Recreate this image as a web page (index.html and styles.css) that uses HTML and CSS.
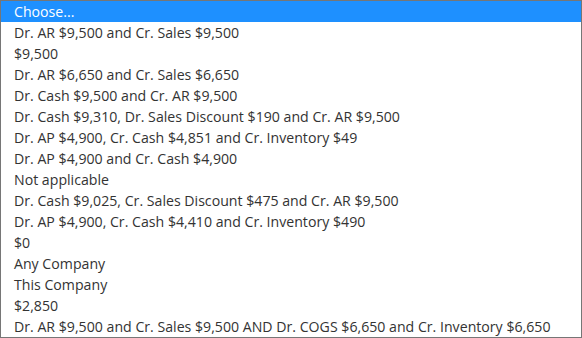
FILE: index.html
```html
<!DOCTYPE html>
<html lang="en">
<head>
  <meta charset="UTF-8">
  <title>Choose</title>
  <link rel="stylesheet" href="styles.css">
</head>
<body>
  <ul class="options">
    <li class="option selected">Choose...</li>
    <li class="option">Dr. AR $9,500 and Cr. Sales $9,500</li>
    <li class="option">$9,500</li>
    <li class="option">Dr. AR $6,650 and Cr. Sales $6,650</li>
    <li class="option">Dr. Cash $9,500 and Cr. AR $9,500</li>
    <li class="option">Dr. Cash $9,310, Dr. Sales Discount $190 and Cr. AR $9,500</li>
    <li class="option">Dr. AP $4,900, Cr. Cash $4,851 and Cr. Inventory $49</li>
    <li class="option">Dr. AP $4,900 and Cr. Cash $4,900</li>
    <li class="option">Not applicable</li>
    <li class="option">Dr. Cash $9,025, Cr. Sales Discount $475 and Cr. AR $9,500</li>
    <li class="option">Dr. AP $4,900, Cr. Cash $4,410 and Cr. Inventory $490</li>
    <li class="option">$0</li>
    <li class="option">Any Company</li>
    <li class="option">This Company</li>
    <li class="option">$2,850</li>
    <li class="option">Dr. AR $9,500 and Cr. Sales $9,500 AND Dr. COGS $6,650 and Cr. Inventory $6,650</li>
  </ul>
</body>
</html>
```

FILE: styles.css
```css
* {
  margin: 0;
  padding: 0;
  box-sizing: border-box;
}

body {
  font-family: 'Open Sans', 'Liberation Sans', sans-serif;
  background: #fff;
}

.options {
  list-style: none;
  width: 582px;
  height: 338px;
  border: 1px solid #767676;
  overflow: hidden;
}

.option {
  height: 21px;
  line-height: 21px;
  padding-left: 13px;
  font-size: 14.15px;
  color: #333;
  white-space: nowrap;
}

.option.selected {
  background: #1e90ff;
  color: #fff;
}
```
